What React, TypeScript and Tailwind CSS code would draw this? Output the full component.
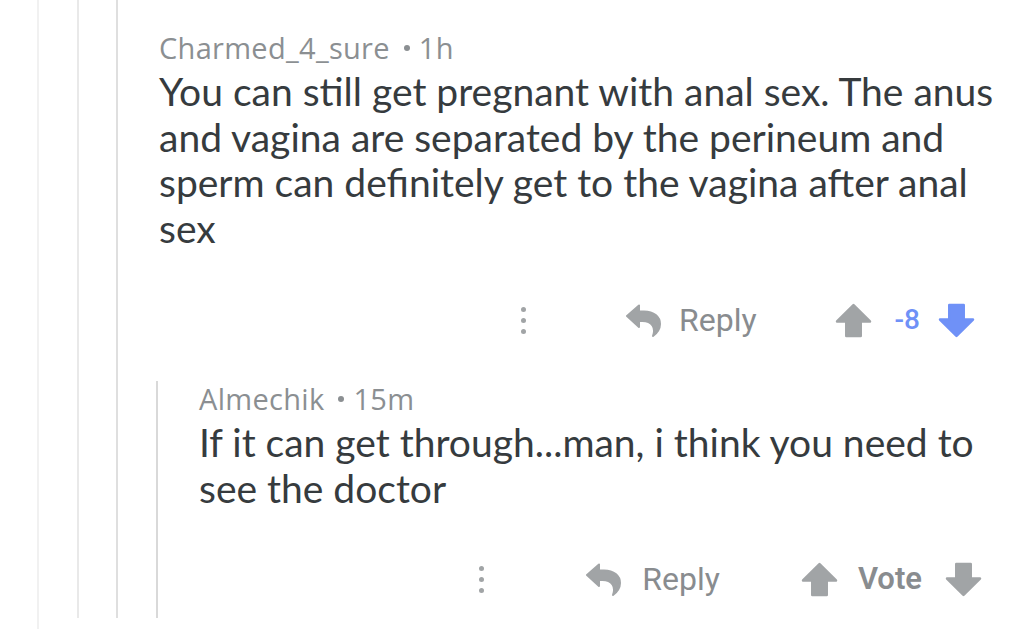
const ReplyIcon = () => (
  <svg width="36" height="33" viewBox="0 0 36 33" className="text-[#a1a4a6]">
    <path
      d="M1 12 L13 1.5 L13 7.5 L18 7.5 C28 7.5 34 13 34 20 C34 25 31 29 27 32 C28.5 28 28.5 24.5 26.5 21.5 C24.5 18.5 20.5 17 16.5 17 L13 17 L13 23 Z"
      fill="currentColor"
      stroke="currentColor"
      strokeWidth="2"
      strokeLinejoin="round"
    />
  </svg>
);

const ArrowUp = ({ color }: { color: string }) => (
  <svg width="37" height="35" viewBox="0 0 36 34" style={{ color }}>
    <path
      d="M18 2 L34 18 L25 18 L25 32 L11 32 L11 18 L2 18 Z"
      fill="currentColor"
      stroke="currentColor"
      strokeWidth="2.5"
      strokeLinejoin="round"
    />
  </svg>
);

const ArrowDown = ({ color }: { color: string }) => (
  <svg width="37" height="35" viewBox="0 0 36 34" style={{ color }}>
    <path
      d="M18 32 L34 16 L25 16 L25 2 L11 2 L11 16 L2 16 Z"
      fill="currentColor"
      stroke="currentColor"
      strokeWidth="2.5"
      strokeLinejoin="round"
    />
  </svg>
);

const Dots = () => (
  <div className="flex flex-col gap-[6px]">
    <span className="w-[5px] h-[5px] rounded-full bg-[#a1a4a6]" />
    <span className="w-[5px] h-[5px] rounded-full bg-[#a1a4a6]" />
    <span className="w-[5px] h-[5px] rounded-full bg-[#a1a4a6]" />
  </div>
);

const Meta = ({ name, time }: { name: string; time: string }) => (
  <div className="flex items-center font-['Open_Sans',sans-serif] text-[29px] leading-[36px] tracking-[0.3px] text-[#8b8f92]">
    <span>{name}</span>
    <span className="ml-[14px] mr-[9px] w-[6px] h-[6px] rounded-full bg-[#8b8f92]" />
    <span>{time}</span>
  </div>
);

function App() {
  return (
    <div className="min-h-screen bg-white font-['Lato',sans-serif] pl-[37px]">
      <div className="min-h-screen border-l-2 border-[#f1f1f1] pl-[38px]">
        <div className="h-[618px] border-l-2 border-[#e9e9e9] pl-[37px]">
          <div className="h-[618px] flex flex-col border-l-2 border-[#dfdfdf] pl-[41px] pr-[20px]">
            {/* parent comment */}
            <div className="pt-[30px]">
              <Meta name="Charmed_4_sure" time="1h" />
            </div>
            <p className="mt-[3px] text-[39px] leading-[45.5px] text-[#363b3e]">
              You can still get pregnant with anal sex. The anus and vagina are
              separated by the perineum and sperm can definitely get to the vagina
              after anal sex
            </p>
            <div className="mt-[45px] flex items-center justify-end pr-[25px] font-['Roboto',sans-serif]">
              <Dots />
              <div className="ml-[100px]">
                <ReplyIcon />
              </div>
              <span className="ml-[17px] text-[32px] text-[#898c8f]">Reply</span>
              <div className="ml-[78px]">
                <ArrowUp color="#a1a4a6" />
              </div>
              <span className="ml-[23px] text-[28px] font-medium text-[#6f91f7]">-8</span>
              <div className="ml-[18px]">
                <ArrowDown color="#6f91f7" />
              </div>
            </div>

            {/* reply */}
            <div className="mt-[37px] ml-[-3px] flex-1 border-l-2 border-[#d9d9d9] pl-[41px]">
              <Meta name="Almechik" time="15m" />
              <p className="mt-[3px] text-[39px] leading-[45.5px] text-[#363b3e]">
                If it can get through...man, i think you need to see the doctor
              </p>
              <div className="mt-[44px] flex items-center justify-end pr-[18px] font-['Roboto',sans-serif]">
                <Dots />
                <div className="ml-[102px]">
                  <ReplyIcon />
                </div>
                <span className="ml-[20px] text-[32px] text-[#898c8f]">Reply</span>
                <div className="ml-[81px]">
                  <ArrowUp color="#a1a4a6" />
                </div>
                <span className="ml-[20px] text-[31px] font-semibold text-[#898c8f]">Vote</span>
                <div className="ml-[23px]">
                  <ArrowDown color="#a1a4a6" />
                </div>
              </div>
            </div>
          </div>
        </div>
      </div>
    </div>
  );
}

export default App;
